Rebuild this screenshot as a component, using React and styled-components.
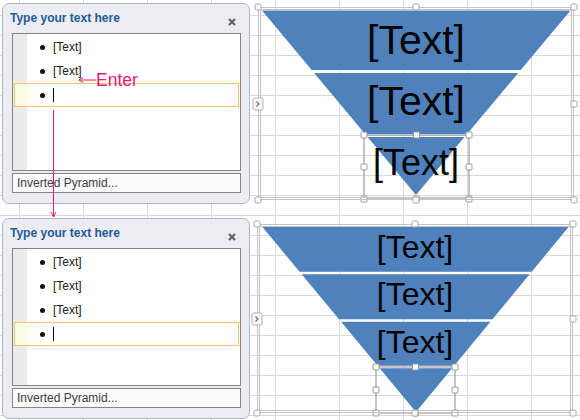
import React from "react";
import styled, { createGlobalStyle } from "styled-components";

const GlobalStyle = createGlobalStyle`
    html, body {
        margin: 0;
        padding: 0;
    }
    body {
        background-color: #fff;
        background-image:
            linear-gradient(to right, #d9d9d9 1px, transparent 1px),
            linear-gradient(to bottom, #d9d9d9 1px, transparent 1px);
        background-size: 64px 20px;
        background-position: 19px 15px;
        font-family: "Liberation Sans", Arial, sans-serif;
    }
`;

const Page = styled.div`
    position: relative;
    width: 580px;
    height: 420px;
    overflow: hidden;
    box-sizing: border-box;
    padding: 3px 0 0 2px;
    display: flex;
    flex-direction: column;
`;

const Section = styled.div`
    display: flex;
    align-items: flex-start;
    height: ${props => props.$h}px;
    flex-shrink: 0;
`;

// text pane on the left
const Pane = styled.section`
    width: 248px;
    height: 201px;
    flex-shrink: 0;
    box-sizing: border-box;
    border: 1px solid #a9bac3;
    border-radius: 7px;
    background: #ececf2;
    padding: 0 8px 10px 9px;
    display: flex;
    flex-direction: column;
`;

const PaneHead = styled.div`
    height: 29px;
    display: flex;
    justify-content: space-between;
    align-items: flex-start;
`;

const PaneTitle = styled.h2`
    margin: 7px 0 0 -2px;
    font: bold 12px/14px "Liberation Sans", Arial, sans-serif;
    color: #1f5c99;
`;

const CloseIcon = styled.svg`
    margin: 14px 5px 0 0;
    width: 8px;
    height: 8px;
`;

const TextBox = styled.div`
    height: 138px;
    box-sizing: border-box;
    border: 1px solid #858585;
    background: linear-gradient(to right, #ebebeb 14px, #fff 14px);
    padding-top: 1px;
    display: flex;
    flex-direction: column;
`;

const Row = styled.div`
    height: 24px;
    box-sizing: border-box;
    margin: 0 1px;
    border: 1px solid ${props => (props.$active ? "#f5c36b" : "transparent")};
    background: ${props =>
        props.$active
            ? "linear-gradient(to right, #fffbe4 0, #fffbe4 12px, #fffdf4 13px, #fff 40px)"
            : "transparent"};
    display: flex;
    align-items: center;
    padding-left: 25px;
`;

const Bullet = styled.span`
    width: 5px;
    height: 5px;
    border-radius: 50%;
    background: #111;
    margin-right: 8px;
`;

const Entry = styled.span`
    font: 12px/14px "Liberation Sans", Arial, sans-serif;
    color: #222;
`;

const Caret = styled.span`
    width: 1px;
    height: 14px;
    background: #000;
`;

const Footer = styled.div`
    margin-top: 2px;
    height: 20px;
    box-sizing: border-box;
    border: 1px solid #858585;
    background: #fbfbfb;
    padding-left: 4px;
    font: 12px/18px "Liberation Sans", Arial, sans-serif;
    color: #3d3d3d;
`;

// chart (smartart) on the right
const ChartFrame = styled.div`
    position: relative;
    flex-shrink: 0;
    margin-left: ${props => props.$ml}px;
    margin-top: ${props => props.$mt}px;
    width: 316px;
    height: ${props => props.$h}px;
    outline: 3px double #c4c4c4;
    outline-offset: -3px;
`;

const ChartSvg = styled.svg`
    display: block;
    overflow: visible;
`;

const Handle = styled.span`
    position: absolute;
    left: ${props => props.$x}%;
    top: ${props => props.$y}%;
    width: 7px;
    height: 7px;
    box-sizing: border-box;
    transform: translate(-50%, -50%);
    background: #fff;
    border: 1px solid #a3a3a3;
    border-radius: 2px;
`;

const ExpandTab = styled.span`
    position: absolute;
    left: 0;
    top: 50%;
    width: 11px;
    height: 13px;
    box-sizing: border-box;
    transform: translate(-50%, -50%);
    background: #f6f6f6;
    border: 1px solid #b4b4b4;
    border-radius: 2px;
    display: flex;
    align-items: center;
    justify-content: center;
`;

// annotations drawn over everything
const DropArrow = styled.svg`
    position: absolute;
    left: 50px;
    top: 108px;
    width: 7px;
    height: 110px;
`;

const EnterNote = styled.div`
    position: absolute;
    left: 78px;
    top: 71px;
    display: flex;
    align-items: center;
    height: 18px;
`;

const EnterText = styled.span`
    font: 17.5px/18px "Liberation Sans", Arial, sans-serif;
    color: #e8177d;
`;

const PINK = "#e8177d";
const BLUE = "#4f81bd";

const bandPolys = ({ ax, bx, top, apexX, apexY, cuts, gap }) => {
    const edges = [top, ...cuts, apexY];
    const lx = y => ax + ((apexX - ax) * (y - top)) / (apexY - top);
    const rx = y => bx + ((apexX - bx) * (y - top)) / (apexY - top);
    return edges.slice(0, -1).map((y0, i) => {
        const a = i === 0 ? y0 : y0 + gap / 2;
        const last = i === edges.length - 2;
        if (last) return `${lx(a)},${a} ${rx(a)},${a} ${apexX},${apexY}`;
        const b = edges[i + 1] - gap / 2;
        return `${lx(a)},${a} ${rx(a)},${a} ${rx(b)},${b} ${lx(b)},${b}`;
    });
};

const charts = [
    {
        h: 193, ml: 8, mt: 4,
        ax: 4, bx: 312.5, top: 3.5, apexX: 158, apexY: 188,
        cuts: [64.5, 128.5], gap: 3,
        labels: [
            { y: 46.5, size: 41 },
            { y: 107.5, size: 41 },
            { y: 168.4, size: 36 },
        ],
        sel: { x: 106, y: 128, w: 105, h: 64 },
    },
    {
        h: 189, ml: 7, mt: 6,
        ax: 5, bx: 312, top: 2.5, apexX: 159, apexY: 188,
        cuts: [49, 96.5, 143], gap: 2.5,
        labels: [
            { y: 34.3, size: 32 },
            { y: 81.3, size: 32 },
            { y: 129.3, size: 32 },
        ],
        sel: { x: 119, y: 143, w: 79, h: 46 },
    },
];

const frameHandles = [
    [0, 0], [50, 0], [100, 0], [100, 50],
    [0, 100], [50, 100], [100, 100],
];

const SelBox = ({ x, y, w, h }) => {
    const pts = [
        [x, y], [x + w / 2, y], [x + w, y],
        [x, y + h / 2], [x + w, y + h / 2],
        [x, y + h], [x + w / 2, y + h], [x + w, y + h],
    ];
    return (
        <g>
            <rect x={x} y={y} width={w} height={h} fill="none" stroke="#8c8c8c" strokeWidth="1" />
            {pts.map(([px, py], i) => (
                <rect key={i} x={px - 3} y={py - 3} width="6" height="6" rx="1"
                    fill="#fff" stroke="#9a9a9a" strokeWidth="1" />
            ))}
        </g>
    );
};

const Pyramid = ({ c }) => (
    <ChartFrame $ml={c.ml} $mt={c.mt} $h={c.h}>
        <ChartSvg width="316" height={c.h} viewBox={`0 0 316 ${c.h}`}>
            {bandPolys(c).map((p, i) => (
                <polygon key={i} points={p} fill={BLUE} />
            ))}
            {c.labels.map((l, i) => (
                <text key={i} x="158" y={l.y} textAnchor="middle" fontSize={l.size}
                    fontFamily="'Liberation Sans', Arial, sans-serif" fill="#050505">
                    [Text]
                </text>
            ))}
            <SelBox {...c.sel} />
        </ChartSvg>
        {frameHandles.map(([x, y], i) => (
            <Handle key={i} $x={x} $y={y} />
        ))}
        <ExpandTab>
            <svg width="5" height="7" viewBox="0 0 5 7">
                <polyline points="1,1 3.5,3.5 1,6" fill="none" stroke="#777" strokeWidth="1.3" />
            </svg>
        </ExpandTab>
    </ChartFrame>
);

const TextPane = ({ count }) => (
    <Pane>
        <PaneHead>
            <PaneTitle>Type your text here</PaneTitle>
            <CloseIcon viewBox="0 0 8 8">
                <path d="M1 1L7 7M7 1L1 7" stroke="#5c5c5c" strokeWidth="2" />
            </CloseIcon>
        </PaneHead>
        <TextBox>
            {Array.from({ length: count }).map((_, i) => (
                <Row key={i}>
                    <Bullet />
                    <Entry>[Text]</Entry>
                </Row>
            ))}
            <Row $active>
                <Bullet />
                <Caret />
            </Row>
        </TextBox>
        <Footer>Inverted Pyramid...</Footer>
    </Pane>
);

export default function App() {
    return (
        <>
            <GlobalStyle />
            <Page>
                <Section $h={215}>
                    <TextPane count={2} />
                    <Pyramid c={charts[0]} />
                </Section>
                <Section $h={202}>
                    <TextPane count={3} />
                    <Pyramid c={charts[1]} />
                </Section>
                <EnterNote>
                    <svg width="18" height="8" viewBox="0 0 18 8">
                        <path d="M1 4H18M1 4L5 1.5M1 4L5 6.5" stroke={PINK} strokeWidth="1" fill="none" />
                    </svg>
                    <EnterText>Enter</EnterText>
                </EnterNote>
                <DropArrow viewBox="0 0 7 110">
                    <path d="M3.5 2V109M1 104L3.5 109L6 104" stroke={PINK} strokeWidth="1" fill="none" />
                </DropArrow>
            </Page>
        </>
    );
}
